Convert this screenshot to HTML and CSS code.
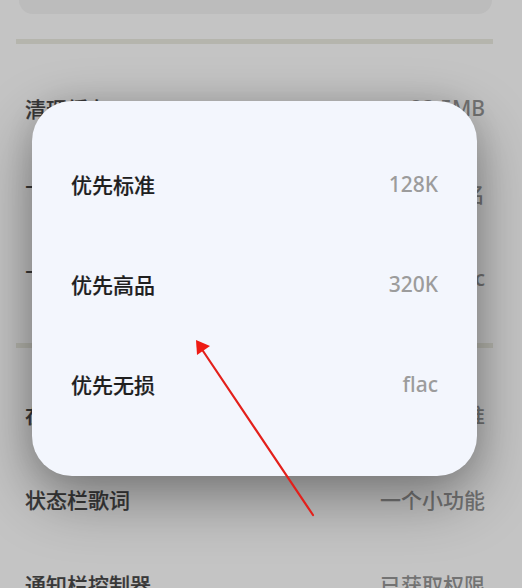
FILE: index.html
```html
<!DOCTYPE html>
<html lang="zh-CN">
<head>
<meta charset="utf-8">
<title>设置</title>
<link rel="stylesheet" href="styles.css">
</head>
<body>
<div class="page">
  <div class="top-card"></div>
  <div class="divider first"></div>
  <div class="group">
    <div class="row"><span class="label">清理缓存</span><span class="value">23.5MB</span></div>
    <div class="row"><span class="label">下载文件命名</span><span class="value">歌手 - 歌名</span></div>
    <div class="row"><span class="label">下载音质</span><span class="value">flac</span></div>
  </div>
  <div class="divider"></div>
  <div class="group">
    <div class="row"><span class="label">在线播放音质</span><span class="value">优先标准</span></div>
    <div class="row"><span class="label">状态栏歌词</span><span class="value">一个小功能</span></div>
    <div class="row"><span class="label">通知栏控制器</span><span class="value">已获取权限</span></div>
  </div>
</div>

<div class="dialog">
  <div class="option"><span class="opt-label">优先标准</span><span class="opt-value">128K</span></div>
  <div class="option"><span class="opt-label">优先高品</span><span class="opt-value">320K</span></div>
  <div class="option"><span class="opt-label">优先无损</span><span class="opt-value">flac</span></div>
</div>

<svg class="arrow" width="522" height="588" viewBox="0 0 522 588">
  <line x1="313" y1="515" x2="201" y2="348" stroke="#e3201b" stroke-width="2.2" stroke-linecap="round"/>
  <polygon points="196,340 197,355 210,346" fill="#ee1b14"/>
</svg>
</body>
</html>
```

FILE: styles.css
```css
html, body {
  margin: 0;
  padding: 0;
}
body {
  width: 522px;
  height: 588px;
  overflow: hidden;
  background: #c4c4c4;
  font-family: "Noto Sans", "Noto Sans CJK SC", sans-serif;
  position: relative;
}
.page {
  display: flex;
  flex-direction: column;
}
.top-card {
  height: 14px;
  margin: 0 30px 0 19px;
  background: #bcbcbc;
  border-radius: 0 0 16px 16px;
}
.divider {
  height: 5px;
  margin: 23px 29px 23px 16px;
  background: #b5b5ad;
}
.divider.first {
  margin-top: 25px;
  margin-bottom: 21px;
}
.group {
  display: flex;
  flex-direction: column;
}
.row {
  height: 85px;
  display: flex;
  align-items: center;
  justify-content: space-between;
  padding: 0 37px 0 25px;
}
.label {
  font-size: 21px;
  font-weight: 500;
  color: #383838;
  -webkit-text-stroke: 0.2px #383838;
}
.value {
  font-size: 21px;
  font-weight: 500;
  color: #737373;
}
.dialog {
  position: absolute;
  left: 32px;
  top: 101px;
  width: 445px;
  height: 375px;
  box-sizing: border-box;
  padding: 33px 39px 42px 39px;
  background: #f3f6fd;
  border-radius: 40px;
  box-shadow: 0 22px 60px rgba(0, 0, 0, 0.38), 0 0 28px rgba(0, 0, 0, 0.1);
  display: flex;
  flex-direction: column;
}
.option {
  height: 100px;
  display: flex;
  align-items: center;
  justify-content: space-between;
}
.opt-label {
  font-size: 21px;
  font-weight: 500;
  color: #1f1f1f;
  -webkit-text-stroke: 0.2px #1f1f1f;
}
.opt-value {
  font-size: 21px;
  font-weight: 500;
  color: #9c9c9c;
}
.arrow {
  position: absolute;
  left: 0;
  top: 0;
  pointer-events: none;
}
```
